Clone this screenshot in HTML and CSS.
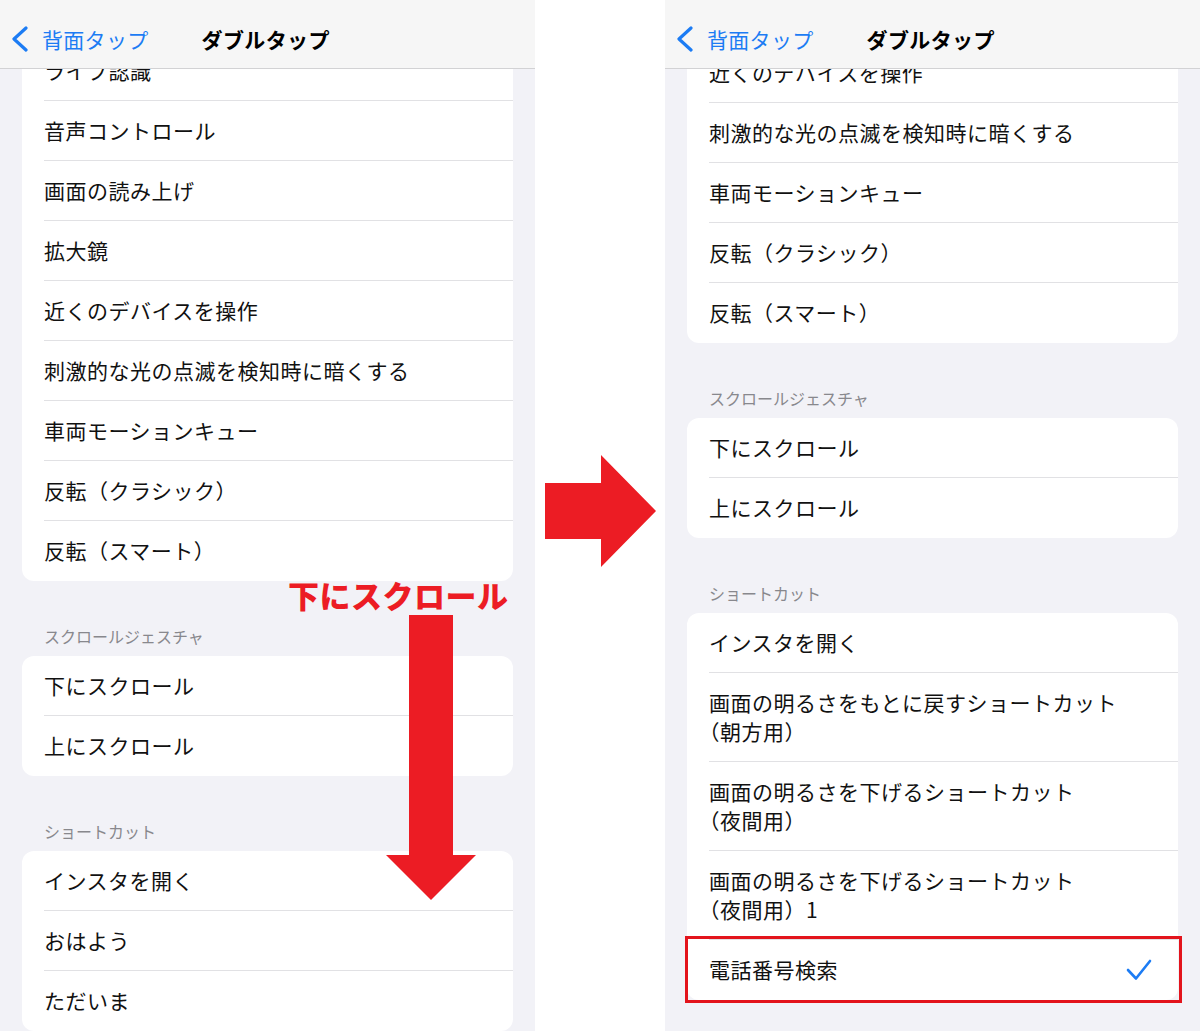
FILE: index.html
```html
<!DOCTYPE html>
<html lang="ja">
<head>
    <meta charset="UTF-8">
    <meta name="viewport" content="width=device-width, initial-scale=1.0">
    <title>ダブルタップ</title>
    <link rel="stylesheet" href="styles.css">
</head>
<body>
<div class="page">

    <!-- 左: スクロール前 -->
    <div class="phone">
        <div class="nav">
            <svg class="chevron" width="18" height="26" viewBox="0 0 18 26"><polyline points="15,2 3,13 15,24" fill="none" stroke="#1c7cf4" stroke-width="3.2" stroke-linecap="round" stroke-linejoin="round"/></svg>
            <span class="back">背面タップ</span>
            <span class="title">ダブルタップ</span>
        </div>
        <div class="content top-left">
            <div class="card">
                <div class="row">ライブ認識</div>
                <div class="row">音声コントロール</div>
                <div class="row">画面の読み上げ</div>
                <div class="row">拡大鏡</div>
                <div class="row">近くのデバイスを操作</div>
                <div class="row">刺激的な光の点滅を検知時に暗くする</div>
                <div class="row">車両モーションキュー</div>
                <div class="row">反転（クラシック）</div>
                <div class="row">反転（スマート）</div>
            </div>
            <div class="header">スクロールジェスチャ</div>
            <div class="card">
                <div class="row">下にスクロール</div>
                <div class="row">上にスクロール</div>
            </div>
            <div class="header">ショートカット</div>
            <div class="card">
                <div class="row">インスタを開く</div>
                <div class="row">おはよう</div>
                <div class="row">ただいま</div>
            </div>
        </div>

        <div class="scroll-label">下にスクロール</div>
        <svg class="down-arrow" width="90" height="285" viewBox="0 0 90 285"><polygon points="23,0 67,0 67,240 90,240 45,285 0,240 23,240" fill="#ec1c24"/></svg>
    </div>

    <div class="between">
        <svg width="111" height="112" viewBox="0 0 111 112"><polygon points="0,28 56,28 56,0 111,56 56,112 56,84 0,84" fill="#ec1c24"/></svg>
    </div>

    <!-- 右: スクロール後 -->
    <div class="phone">
        <div class="nav">
            <svg class="chevron" width="18" height="26" viewBox="0 0 18 26"><polyline points="15,2 3,13 15,24" fill="none" stroke="#1c7cf4" stroke-width="3.2" stroke-linecap="round" stroke-linejoin="round"/></svg>
            <span class="back">背面タップ</span>
            <span class="title">ダブルタップ</span>
        </div>
        <div class="content top-right">
            <div class="card">
                <div class="row">近くのデバイスを操作</div>
                <div class="row">刺激的な光の点滅を検知時に暗くする</div>
                <div class="row">車両モーションキュー</div>
                <div class="row">反転（クラシック）</div>
                <div class="row">反転（スマート）</div>
            </div>
            <div class="header">スクロールジェスチャ</div>
            <div class="card">
                <div class="row">下にスクロール</div>
                <div class="row">上にスクロール</div>
            </div>
            <div class="header">ショートカット</div>
            <div class="card">
                <div class="row">インスタを開く</div>
                <div class="row">画面の明るさをもとに戻すショートカット<br>（朝方用）</div>
                <div class="row">画面の明るさを下げるショートカット<br>（夜間用）</div>
                <div class="row">画面の明るさを下げるショートカット<br>（夜間用）1</div>
                <div class="row selected">
                    <span>電話番号検索</span>
                    <svg width="26" height="22" viewBox="0 0 26 22"><polyline points="2,11 10,19.5 24,2" fill="none" stroke="#1c7cf4" stroke-width="2.6" stroke-linecap="round" stroke-linejoin="round"/></svg>
                </div>
            </div>
        </div>
    </div>

</div>
</body>
</html>
```

FILE: styles.css
```css
body{
    margin: 0;
    background-color: white;
    font-family: "Noto Sans CJK JP", "Noto Sans", sans-serif;
    color: #111;
}

.page{
    display: flex;
    width: 1200px;
    height: 1031px;
    overflow: hidden;
}

.phone{
    position: relative;
    width: 535px;
    height: 1031px;
    flex-shrink: 0;
    overflow: hidden;
    background-color: #f2f2f7;
}

.between{
    width: 130px;
    flex-shrink: 0;
    display: flex;
    justify-content: center;
    padding-top: 455px;
}

/* barra de navegação sobre o conteúdo */
.nav{
    position: absolute;
    top: 0;
    left: 0;
    right: 0;
    z-index: 2;
    height: 69px;
    box-sizing: border-box;
    padding: 10px 0 0 11px;
    display: flex;
    align-items: center;
    background-color: #f6f6f6;
    border-bottom: 1px solid #d2d2d4;
}
.chevron{
    margin-right: 13px;
}
.back{
    font-size: 21px;
    letter-spacing: 0.3px;
    color: #1c7cf4;
}
.title{
    margin-left: 53px;
    font-size: 21px;
    font-weight: bold;
    letter-spacing: 0.4px;
    color: #000;
}

.content{
    padding: 0 22px;
}
.top-left{
    padding-top: 41px;
}
.top-right{
    padding-top: 43px;
}

.card{
    background-color: white;
    border-radius: 12px;
}
.content .card:first-child{
    border-radius: 0 0 12px 12px;
}

.row{
    position: relative;
    margin-left: 22px;
    padding: 15px 22px 15px 0;
    line-height: 29px;
    font-size: 21px;
    letter-spacing: 0.5px;
    text-spacing-trim: trim-start;
    border-bottom: 1px solid #e1e1e4;
}
.row:last-child{
    border-bottom: none;
    padding-bottom: 16px;
}

.header{
    padding: 45px 0 10px 22px;
    line-height: 20px;
    font-size: 16px;
    color: #88888d;
}

.selected{
    display: flex;
    justify-content: space-between;
    align-items: center;
    padding-right: 26px;
}
.selected::after{
    content: "";
    position: absolute;
    top: -4px;
    bottom: -3px;
    left: -24px;
    right: -4px;
    border: 3px solid #e3141c;
}

.scroll-label{
    position: absolute;
    left: 288px;
    top: 575px;
    line-height: 40px;
    font-size: 31px;
    font-weight: 900;
    color: #ec1c24;
    letter-spacing: 0.5px;
}
.down-arrow{
    position: absolute;
    left: 386px;
    top: 615px;
}
```
